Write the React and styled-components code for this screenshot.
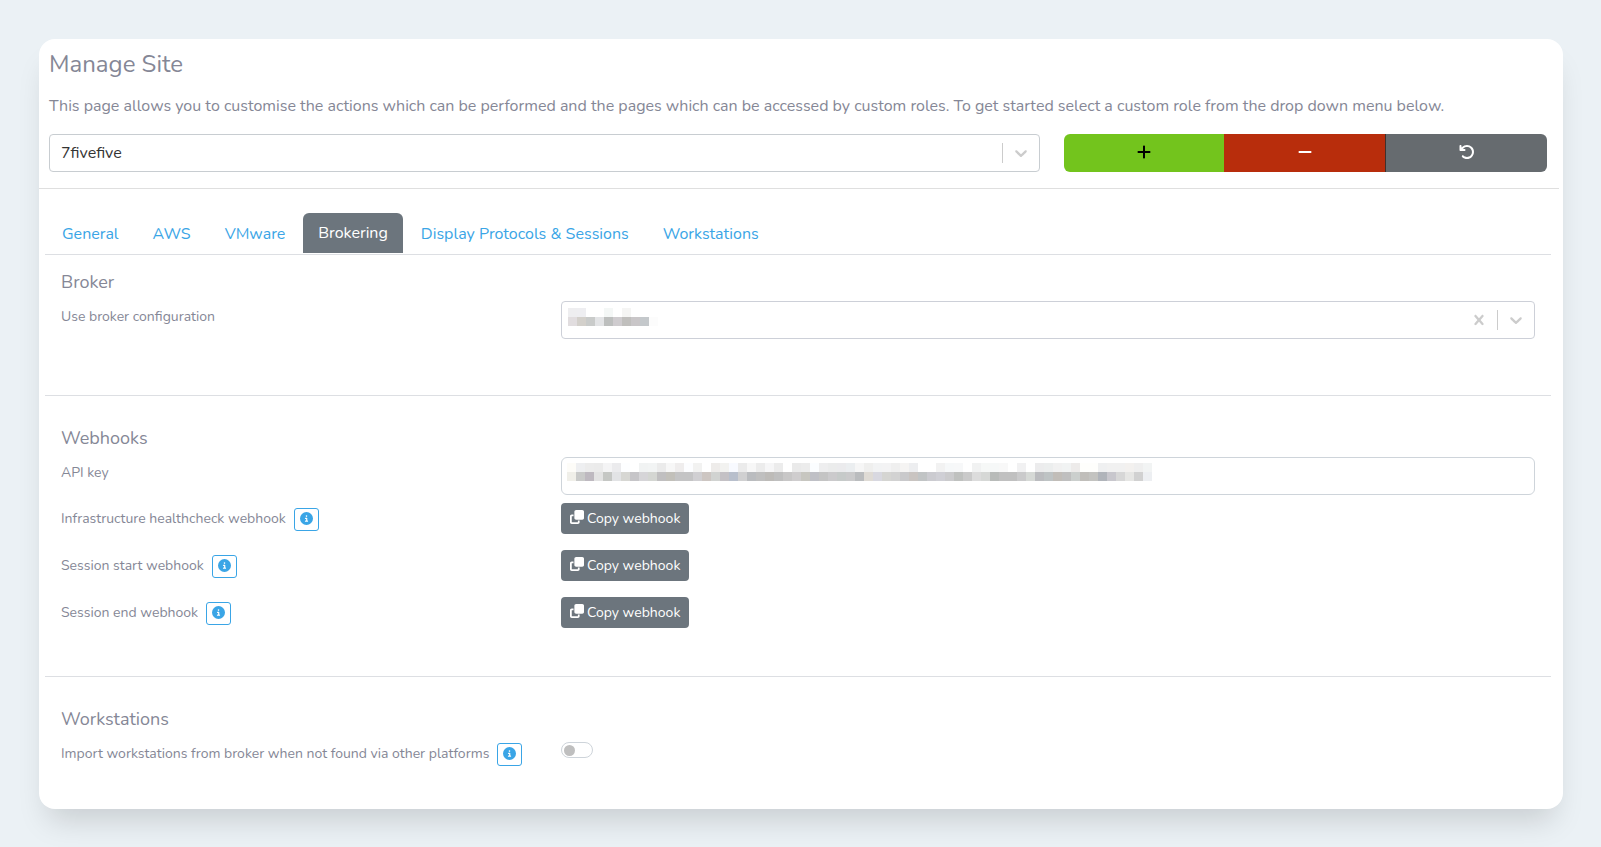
// pages/ManageSite.jsx
import React, { useState } from 'react';
import styled, { createGlobalStyle } from 'styled-components';
import { FaArrowRotateLeft, FaCircleInfo, FaClone, FaMinus, FaPlus } from 'react-icons/fa6';

const GlobalStyle = createGlobalStyle`
  *, *::before, *::after {
    box-sizing: border-box;
  }

  body {
    margin: 0;
    background-color: #ebf1f5;
    color: #858796;
    font-family: Nunito, 'Open Sans', sans-serif;
    font-size: 16px;
    line-height: 24px;
  }

  button, input, select {
    font-family: inherit;
  }
`;

const Page = styled.main`
  padding: 39px 38px 38px 39px;
`;

const Card = styled.div`
  background-color: #fff;
  border-radius: 16px;
  box-shadow: 0 20px 30px -9px rgba(0, 0, 0, 0.15);
`;

const Header = styled.header`
  padding: 10px 16px 16px 10px;
`;

const Title = styled.h1`
  margin: 0 0 14px;
  font-size: 24px;
  font-weight: 400;
  line-height: 31px;
`;

const Description = styled.p`
  margin: 0 0 16px;
`;

const SiteBar = styled.div`
  display: grid;
  grid-template-columns: 41fr 20fr;
  gap: 24px;
`;

const SelectBox = styled.div`
  position: relative;
  display: grid;
  grid-template-columns: 1fr auto auto auto;
  align-items: center;
  height: 38px;
  border: 1px solid ${(p) => p.$border || '#c8cdd1'};
  border-radius: 4px;
`;

const Select = styled.select`
  grid-area: 1 / 1 / 2 / -1;
  width: 100%;
  height: 36px;
  padding: 0 80px 0 11px;
  border: none;
  border-radius: 4px;
  background: transparent;
  color: #333;
  font-size: 16px;
  appearance: none;
`;

const Separator = styled.span`
  grid-area: 1 / 3;
  width: 1px;
  height: 20px;
  background-color: #ccc;
  pointer-events: none;
`;

const Indicator = styled.span`
  grid-area: 1 / 4;
  display: flex;
  padding: 8px;
  color: #ccc;
  pointer-events: none;
`;

const ClearButton = styled.button`
  grid-area: 1 / 2;
  z-index: 1;
  display: flex;
  padding: 8px;
  border: none;
  background: transparent;
  color: #ccc;
  cursor: pointer;
`;

const ButtonGroup = styled.div`
  display: flex;
  height: 38px;
  border-radius: 6px;
  overflow: hidden;
`;

const GroupButton = styled.button`
  display: flex;
  flex: 1 1 auto;
  align-items: center;
  justify-content: center;
  padding: 0 0 3px;
  border: none;
  border-left: ${(p) => (p.$divided ? '1px solid #40302c' : 'none')};
  background-color: ${(p) => p.$bg};
  color: ${(p) => p.$color || '#fff'};
  font-size: 16px;
  cursor: pointer;
`;

const Divider = styled.hr`
  height: 1px;
  margin: 0 4px 0 0;
  border: none;
  background-color: #dfdfdf;
`;

const Content = styled.div`
  margin: 0 12px 0 6px;
`;

const Tabs = styled.nav`
  display: flex;
  align-items: flex-end;
  padding-top: 24px;
  border-bottom: 1px solid #dddfe3;
`;

const Tab = styled.a`
  margin: 0 1px ${(p) => (p.$active ? '1px' : '0')};
  padding: 8px ${(p) => (p.$active ? '15px' : '16px')};
  border-radius: 6px 6px 0 0;
  background-color: ${(p) => (p.$active ? '#6c757d' : 'transparent')};
  color: ${(p) => (p.$active ? '#fff' : '#3aa5e6')};
  text-decoration: none;
`;

const Section = styled.section`
  padding: ${(p) => (p.$first ? '17px' : '32px')} 16px ${(p) => p.$bottom};
  border-top: ${(p) => (p.$first ? 'none' : '1px solid #dddfe3')};
`;

const SectionTitle = styled.h2`
  margin: 0 0 8px;
  font-size: 18px;
  font-weight: 400;
  line-height: 21px;
`;

const Row = styled.div`
  display: grid;
  grid-template-columns: 1fr 2fr;
  gap: 13px;
  align-items: start;
  margin-top: ${(p) => p.$top || '0'};
`;

const LabelCell = styled.div`
  display: flex;
  gap: 8px;
  padding-top: 5px;
  font-size: 14px;
  line-height: 21px;
`;

const InfoButton = styled.button`
  display: flex;
  height: 23px;
  padding: 3px 5px;
  border: 1px solid #3aa5e6;
  border-radius: 3px;
  background-color: #fff;
  color: #3aa5e6;
  font-size: 13px;
  cursor: pointer;
`;

const InputBox = styled.div`
  position: relative;
`;

const TextInput = styled.input`
  display: block;
  width: 100%;
  height: 38px;
  padding: 6px 12px;
  border: 1px solid #ced4da;
  border-radius: 6px;
  background-color: #fff;
  color: #6e707e;
  font-size: 16px;
`;

const MaskImage = styled.svg`
  position: absolute;
  top: 6px;
  left: 6px;
  pointer-events: none;
`;

const CopyButton = styled.button`
  display: flex;
  gap: 3px;
  justify-self: start;
  padding: 5px 9px;
  border: none;
  border-radius: 4px;
  background-color: #6c757d;
  color: #fff;
  font-size: 14px;
  line-height: 21px;
  cursor: pointer;

  svg {
    margin-top: 2px;
  }
`;

const Switch = styled.input`
  appearance: none;
  display: flex;
  align-items: center;
  width: 32px;
  height: 16px;
  margin: 4px 0 0;
  padding: 0 2px;
  border: 1px solid #ced4da;
  border-radius: 8px;
  background-color: #fff;
  cursor: pointer;

  &::before {
    content: '';
    width: 11px;
    height: 11px;
    border-radius: 50%;
    background-color: #bfbfbf;
  }

  &:checked {
    justify-content: flex-end;
  }
`;

const tabs = ['General', 'AWS', 'VMware', 'Brokering', 'Display Protocols & Sessions', 'Workstations'];

const webhooks = ['Infrastructure healthcheck webhook', 'Session start webhook', 'Session end webhook'];

// Pixelated values, one hex colour per 9px cell
const brokerMask = [
  'eeeef0 eeeef1 ffffff ffffff f4f7f6 ffffff f5f5f4',
  'e1dddf d3d0cb c9cbca e3e4e6 bdbfbe cfcccf c0bfbd c9c6c8 c4c8cb fcfcfc',
];

const apiKeyMask = [
  'fdfcf8 eeeff1 ececec ebebeb f4f4f5 ebebed fdfeff ffffff f1f3f3 f2f4f4 ebebeb f7f7f7 efeded fcfdff f2f2f1 ffffff eeecea f2f2f0 f8faff ebebeb f7f7f7 ececec f6f6f7 ececec ffffff eaeaea ececec fbfdff eeeeef ebecec ebebed ebeef0 f6f6f6 efefee f2f3f4 f3f3f4 efefef f5f4f3 edeef0 ffffff ffffff f2f2f2 f6f8f9 f7f8f9 ffffff f1f2f2 f6f8f7 f6f8f8 f8f8f8 ffffff f1f1f2 ffffff ececed eceeee f1f1f1 f1f3f3 edebea fefefc fefefc eff0f1 f1f1f1 f1f1f1 f3f1ef efefef f2f4f4',
  'f0efe9 c9cac9 beb9c0 e3e3e3 c5c7c4 e2e3e5 d7d7d3 c6c5c8 d6d5d8 d4d6d2 c0bfc0 c2c0ba c4c4c5 c4c4c5 d0cfd2 cdc6c2 d1d3d1 c4c1c5 b8bfcc d0d0d1 babcbf bfbfbf bdbbb8 bfbfbf c8c7c7 cfcdce c7c6c0 bfc0c6 c4c4c4 cbcacc c6cac9 cacacb babcbe dfdbd5 d8d8e0 d5d5d2 d2d2d2 c9c9cb c9c4c1 c1c4c5 cbcbd0 cfcfd5 cbcbcd bfc1bf cacaca dcdcdc d6d8d6 b8bbb9 c0c0c0 c0c0c0 cacacb d6d9d6 bbbcbf bec3c4 c1bdb8 bfbfbf cbcfcd c0beba c3c3c0 b0b4ba c8c7cd d7d7d7 e6e6e4 d1d1d1 edeff2',
];

const CELL = 9;

const PixelMask = ({ rows }) => {
  const grid = rows.map((row) => row.split(' '));
  const columns = Math.max(...grid.map((row) => row.length));

  return (
    <MaskImage width={columns * CELL} height={grid.length * CELL} shapeRendering="crispEdges" aria-hidden="true">
      {grid.map((row, y) =>
        row.map((color, x) => (
          <rect key={`${x}-${y}`} x={x * CELL} y={y * CELL} width={CELL} height={CELL} fill={`#${color}`} />
        ))
      )}
    </MaskImage>
  );
};

const ChevronIcon = () => (
  <svg width="20" height="20" viewBox="0 0 20 20" fill="currentColor" aria-hidden="true">
    <path d="M4.516 7.548c0.436-0.446 1.043-0.481 1.576 0l3.908 3.747 3.908-3.747c0.533-0.481 1.141-0.446 1.574 0 0.436 0.445 0.408 1.197 0 1.615-0.406 0.418-4.695 4.502-4.695 4.502-0.217 0.223-0.502 0.335-0.787 0.335s-0.57-0.112-0.789-0.335c0 0-4.287-4.084-4.695-4.502s-0.436-1.17 0-1.615z" />
  </svg>
);

const CrossIcon = () => (
  <svg width="20" height="20" viewBox="0 0 20 20" fill="currentColor" aria-hidden="true">
    <path d="M14.348 14.849c-0.469 0.469-1.229 0.469-1.697 0l-2.651-3.030-2.651 3.029c-0.469 0.469-1.229 0.469-1.697 0-0.469-0.469-0.469-1.229 0-1.697l2.758-3.15-2.759-3.152c-0.469-0.469-0.469-1.228 0-1.697s1.228-0.469 1.697 0l2.652 3.031 2.651-3.031c0.469-0.469 1.228-0.469 1.697 0s0.469 1.229 0 1.697l-2.758 3.152 2.758 3.15c0.469 0.469 0.469 1.229 0 1.698z" />
  </svg>
);

const Info = ({ about }) => (
  <InfoButton type="button" aria-label={`About ${about}`}>
    <FaCircleInfo />
  </InfoButton>
);

const App = () => {
  const [activeTab, setActiveTab] = useState('Brokering');
  const [importWorkstations, setImportWorkstations] = useState(false);

  return (
    <Page>
      <GlobalStyle />
      <Card>
        <Header>
          <Title>Manage Site</Title>
          <Description>
            This page allows you to customise the actions which can be performed and the pages which can be accessed by custom roles. To get started select a custom role from the drop down menu below.
          </Description>
          <SiteBar>
            <SelectBox>
              <Select aria-label="Site">
                <option>7fivefive</option>
              </Select>
              <Separator />
              <Indicator>
                <ChevronIcon />
              </Indicator>
            </SelectBox>
            <ButtonGroup>
              <GroupButton type="button" $bg="#73c41d" $color="#000" aria-label="Add site">
                <FaPlus />
              </GroupButton>
              <GroupButton type="button" $bg="#b82d0c" aria-label="Remove site">
                <FaMinus />
              </GroupButton>
              <GroupButton type="button" $bg="#666b6f" $divided aria-label="Reset">
                <FaArrowRotateLeft />
              </GroupButton>
            </ButtonGroup>
          </SiteBar>
        </Header>
        <Divider />
        <Content>
          <Tabs>
            {tabs.map((tab) => (
              <Tab
                key={tab}
                href="#"
                $active={tab === activeTab}
                onClick={(e) => {
                  e.preventDefault();
                  setActiveTab(tab);
                }}
              >
                {tab}
              </Tab>
            ))}
          </Tabs>

          <Section $first $bottom="56px">
            <SectionTitle>Broker</SectionTitle>
            <Row>
              <LabelCell>
                <label htmlFor="broker">Use broker configuration</label>
              </LabelCell>
              <SelectBox $border="#cdd0d8">
                <Select id="broker">
                  <option aria-label="Hidden broker" />
                </Select>
                <PixelMask rows={brokerMask} />
                <ClearButton type="button" aria-label="Clear broker">
                  <CrossIcon />
                </ClearButton>
                <Separator />
                <Indicator>
                  <ChevronIcon />
                </Indicator>
              </SelectBox>
            </Row>
          </Section>

          <Section $bottom="48px">
            <SectionTitle>Webhooks</SectionTitle>
            <Row>
              <LabelCell>
                <label htmlFor="api-key">API key</label>
              </LabelCell>
              <InputBox>
                <TextInput id="api-key" type="text" />
                <PixelMask rows={apiKeyMask} />
              </InputBox>
            </Row>
            {webhooks.map((webhook, index) => (
              <Row key={webhook} $top={index === 0 ? '8px' : '16px'}>
                <LabelCell>
                  <span>{webhook}</span>
                  <Info about={webhook} />
                </LabelCell>
                <CopyButton type="button">
                  <FaClone />
                  Copy webhook
                </CopyButton>
              </Row>
            ))}
          </Section>

          <Section $bottom="43px">
            <SectionTitle>Workstations</SectionTitle>
            <Row>
              <LabelCell>
                <label htmlFor="import-workstations">
                  Import workstations from broker when not found via other platforms
                </label>
                <Info about="importing workstations" />
              </LabelCell>
              <Switch
                id="import-workstations"
                type="checkbox"
                role="switch"
                checked={importWorkstations}
                onChange={(e) => setImportWorkstations(e.target.checked)}
              />
            </Row>
          </Section>
        </Content>
      </Card>
    </Page>
  );
};

export default App;
